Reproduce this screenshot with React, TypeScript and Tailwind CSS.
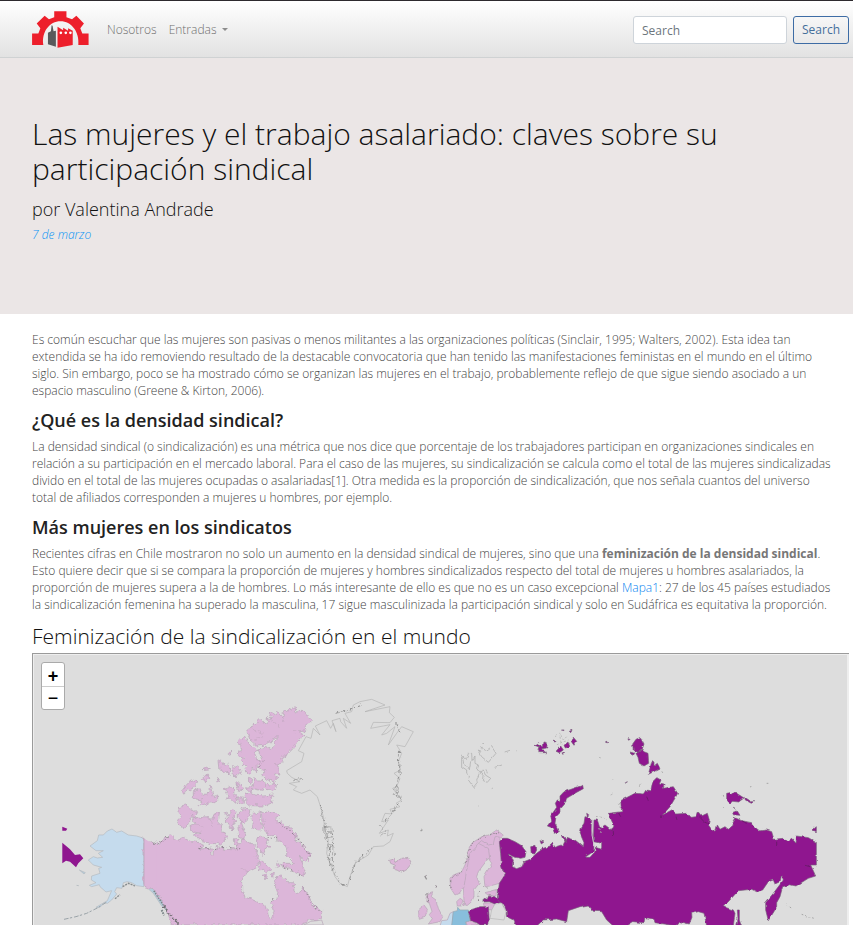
import React from "react";

const RED = "#ed1f2b";

function Logo() {
  return (
    <svg viewBox="96 32 172 112" className="h-[37px] w-[57px]" role="img" aria-label="Inicio">
      <path
        fill={RED}
        d="M163 33H200V51L217 57 230 46 253 70 242 84 248 100H267V135H236C240 95 215 63 182 63C149 63 124 95 130 135H96V100H115L121 84 110 70 134 46 147 57 163 51Z"
      />
      <path fill="#58595b" d="M144 98L153 93 155 75 158 77 161 93 168 92V140L144 133Z" />
      <path fill={RED} d="M173 80L190 90V83L205 92V84L219 92V135L173 143Z" />
      <g fill="#fff">
        <circle cx="183" cy="98" r="4" />
        <circle cx="198" cy="98" r="4" />
        <circle cx="212" cy="98" r="4" />
      </g>
    </svg>
  );
}

function Navbar() {
  return (
    <nav className="flex h-[58px] shrink-0 items-center border-t border-b border-t-[#2d2a2e] border-b-[#cfd2d3] bg-linear-to-b from-white to-[#e2e2e2] pt-px pr-1 pl-8">
      <a href="#inicio" className="mr-[18px]">
        <Logo />
      </a>
      <div className="flex flex-1 items-center gap-3 text-[12px] font-light text-[#6f6f6f]">
        <a href="#nosotros">Nosotros</a>
        <button type="button" className="flex items-center gap-[6px]">
          Entradas
          <span className="border-x-[3px] border-t-[3px] border-x-transparent border-t-[#8c8c8c]" />
        </button>
      </div>
      <form className="flex items-center gap-[6px] text-[12px]">
        <input
          type="search"
          aria-label="Search"
          placeholder="Search"
          className="h-7 w-[154px] rounded-[3px] border border-[#ced4da] bg-white px-2 pt-px placeholder:text-[#6c757d]"
        />
        <button type="button" className="h-7 rounded-[3px] border border-[#3d6ca5] px-2 text-[#446e9b]">
          Search
        </button>
      </form>
    </nav>
  );
}

const PINK = "#dcb6d9";
const PURPLE = "#8f168f";

const canada = [
  "M-18 447L0 455 12 463 20 456 28 460 40 447 56 443 62 434 68 440 85 448 100 442 120 452 145 458 165 468 150 478 185 474 186 494 192 494 195 476 205 468 225 478 265 480 262 462 275 460 280 445 300 460 312 462 320 480 318 492 332 508 320 530 290 545 283 560 275 575 275 600 285 620 305 628 330 640 350 650 355 680 365 690 372 675 365 640 380 625 385 600 375 580 380 560 395 558 410 575 430 575 432 600 445 612 455 600 460 585 472 612 485 640 515 665 515 685 500 692 480 693 450 705H65L45 650 20 605 -5 590 -18 587Z",
  "M290 122L312 108 330 88 342 99 352 98 348 85 365 90 358 70 365 65 376 74 385 62 398 78 404 65 430 53 440 66 455 62 470 75 484 93 465 110 470 122 445 126 462 135 440 160 425 180 410 195 395 205 400 218 382 225 390 250 376 256 380 268 368 276 350 268 335 255 345 242 325 235 325 215 335 205 325 180 370 170 385 140 365 148 350 165 320 168 300 150Z",
  "M268 155L283 137 296 160 318 178 315 195 330 215 318 224 320 245 306 234 308 250 292 248 285 240 290 228 278 215 284 205 265 200 262 185 276 182Z",
  "M290 295L304 293 310 285 315 262 324 272 340 275 355 285 380 280 375 300 365 305 350 294 335 301 312 296 300 305Z",
  "M285 310L300 305 315 315 340 318 370 315 364 340 340 348 300 347 288 335Z",
  "M130 305L150 295 158 318 175 310 180 285 190 320 203 315 203 330 178 338 160 350 150 343 160 332 130 325Z",
  "M95 303L115 278 140 268 138 288 120 300 112 294 108 310 98 312Z",
  "M155 242L175 232 180 240Z M155 265L172 255 178 264 162 275Z M207 212L217 215 220 225 234 222 243 238 240 258 228 246 210 240Z M250 230L262 232 274 247 262 252 254 260Z",
  "M225 296L236 290 250 292 252 310 262 320 255 338 242 325 228 330 234 316Z M258 282L270 282 282 292 280 302 266 300Z M262 322L280 325 280 340 265 338Z M200 262L212 278 205 275Z M238 190L244 180 246 195Z M295 265L305 268 302 280 296 275Z",
  "M85 350L105 345 124 356 142 370 120 385 118 400 105 418 80 402 90 380Z",
  "M125 375L150 385 165 380 185 388 192 370 208 366 205 395 215 405 213 425 228 430 228 450 215 462 180 460 160 455 130 435 155 430 125 425 120 410 135 402Z",
  "M228 368L238 372 250 360 258 368 256 380 248 382 255 400 245 420 238 402 230 400Z M268 362L280 356 300 360 294 385 285 395 282 402 268 390Z M264 414L275 395 288 430 280 448 266 442Z M250 450L264 448 264 464 252 462Z",
  "M310 370L335 365 330 395 340 412 325 425 308 412 303 385Z",
  "M337 370L352 364 375 365 390 380 372 386 388 400 392 392 404 408 425 415 430 425 442 436 440 450 450 465 466 475 482 495 470 515 450 502 458 525 466 545 460 560 444 548 430 545 416 532 400 530 395 520 430 520 410 500 410 470 390 455 375 440 350 430 340 410Z",
  "M325 438L350 444 357 470 346 478 340 495 320 470Z",
  "M330 512L345 522 362 540 350 546 340 538 325 540Z M340 555L350 555 345 567Z M364 550L370 548 368 564Z M380 520L392 518 392 530 382 532Z",
];

const greenland =
  "M172 250L170 242 215 215 222 190 205 182 228 140 243 145 250 115 270 135 256 108 290 92 302 115 310 100 318 125 306 92 330 85 332 95 350 115 340 85 362 100 345 70 365 65 370 45 390 35 425 28 465 45 405 65 480 50 478 68 493 82 480 98 430 97 422 115 460 108 480 104 455 135 470 130 495 110 475 165 500 130 515 110 550 125 525 170 500 165 515 190 505 215 512 240 492 250 510 265 500 290 488 295 515 330 498 340 510 350 480 358 486 372 465 370 455 395 475 390 448 430 475 420 472 438 490 430 480 455 460 468 430 470 415 495 390 510 375 520 360 560 352 590 330 580 315 560 300 520 290 490 295 450 285 420 280 380 270 345 262 320 240 300 215 310 190 300 200 290 178 280 210 275 185 262Z";

const russia = [
  "M298 365L308 355 322 355 345 365 365 377 378 395 375 412 362 415 340 410 325 402 340 420 337 440 350 446 366 440 372 425 390 418 410 400 430 385 450 378 458 370 465 382 490 374 500 352 525 360 550 380 552 368 540 340 545 320 552 310 555 290 575 295 575 330 582 380 580 395 555 412 570 412 585 395 586 382 605 388 605 370 580 365 582 300 592 300 600 325 615 315 635 330 642 318 625 280 665 275 662 242 705 220 730 222 738 210 752 213 758 185 770 173 783 180 778 192 792 195 790 205 820 200 833 220 825 235 810 260 788 285 815 270 830 282 860 280 870 292 890 290 895 276 905 288 922 280 928 300 925 315 940 335 948 330 952 315 960 328 975 320 985 328 1000 315 996 308 1005 293 1025 302 1055 308 1060 320 1075 333 1100 330 1115 335 1122 358 1150 355 1165 362 1175 355 1188 370 1190 348 1225 353 1249 367V435L1232 435 1247 468 1225 475 1188 498 1170 494 1148 500 1140 530 1130 548 1130 562 1105 602 1097 570 1097 548 1120 520 1150 480 1145 465 1140 485 1125 492 1120 480 1105 485 1088 510 1070 515 1055 508 1015 512 985 545 970 560 1000 570 1005 580 1000 618H920L912 580 895 575 875 580 876 592 868 612 840 605 830 618 765 608 762 598 735 592 732 608 700 605 680 618H640L620 600 605 575 580 574 565 555 540 560 505 572 500 605 470 597 430 600 410 618H350L340 600 320 590 318 570 310 550 290 545 295 515 298 490 315 465 305 440 302 400Z",
  "M442 318L455 300 452 288 470 262 466 250 472 240 480 242 480 228 492 215 548 196 550 206 528 218 500 235 498 244 480 265 480 278 468 290 465 310 478 335 462 340 458 324Z",
  "M484 345L492 350 500 368 488 356Z M420 362L432 366 424 372Z M392 380L408 376 410 390 404 402 394 400Z M560 280L566 284 562 290Z",
  "M404 76L416 68 419 82Z M414 88L420 74 430 80 432 66 442 68 440 84 426 86 426 92 440 98 418 98Z M468 94L482 78 490 90 478 98Z M492 76L504 66 510 80 496 84Z M512 62L520 52 530 64 522 76Z M484 30L490 26 492 32Z M508 34L516 31 512 38Z M486 98L494 100 488 103Z M458 60L470 64 462 66Z",
  "M616 66L622 63 622 69Z M684 53L692 56 686 61Z M676 188L682 185 680 192Z",
  "M698 72L708 58 722 52 732 72 726 90 712 98 700 92Z M708 100L724 92 744 100 746 130 732 138 718 130 714 112Z M745 163L756 122 762 126 762 138 772 130 780 146Z M690 96L704 100 700 106Z",
  "M980 220L990 218 994 226 1004 216 1032 234 1016 246 998 244 990 250 980 240Z M1034 232L1050 242 1064 242 1054 250 1036 240Z M998 278L1010 270 1020 286 1000 284Z M1238 330L1249 320 1249 335Z M1000 262L1006 266Z",
  "M1012 570L1018 570 1018 600 1024 618H1010L1014 596Z",
  "M252 535L262 538 266 528 285 530 300 548 285 552 268 545 252 546Z",
  "M205 572L240 560 265 560 268 600 262 615H240L230 608 212 602Z",
];

const nordic = [
  "M150 478L160 465 185 455 195 435 205 410 202 398 215 370 245 350 268 345 290 330 310 345 300 355 298 375 302 400 305 440 315 465 298 490 270 498 255 500 252 470 275 430 265 415 250 435 235 455 230 470 238 490 222 510 222 530 215 545 200 558 192 545 190 500 180 518 165 525 152 505Z",
  "M84 520L98 515 94 530 108 540 115 565 128 590 120 605 85 612 97 596 88 584 96 574 88 550 80 545Z",
  "M55 570L72 555 82 568 75 592 58 598Z",
  "M170 545L180 535 188 540 185 558 172 558Z M190 552L196 550 194 560Z",
  "M255 518L290 508 288 528 265 526Z",
  "M250 550L285 548 278 570 255 568Z",
  "M197 605L215 603 235 615H195Z",
];

const UNIT = "scale(0.33333)";

function WorldMap() {
  return (
    <svg
      viewBox="34 655 813 270"
      preserveAspectRatio="xMidYMin slice"
      className="block size-full"
      role="img"
      aria-label="Mapa de la feminización de la sindicalización en el mundo"
    >
      <defs>
        <filter id="fjords" x="-5%" y="-5%" width="110%" height="110%">
          <feTurbulence type="fractalNoise" baseFrequency="0.07" numOctaves="3" seed="4" />
          <feDisplacementMap in="SourceGraphic" scale="20" xChannelSelector="R" yChannelSelector="G" />
        </filter>
        <filter id="coast" x="-5%" y="-5%" width="110%" height="110%">
          <feTurbulence type="fractalNoise" baseFrequency="0.06" numOctaves="2" seed="4" />
          <feDisplacementMap in="SourceGraphic" scale="9" xChannelSelector="R" yChannelSelector="G" />
        </filter>
      </defs>

      {/* Alaska and the Aleutians */}
      <g transform={`translate(20 620) ${UNIT}`} stroke="#b3b9c0" strokeWidth="2">
        <path
          fill="#c5dbed"
          d="M210 678L232 662 236 645 250 645 262 633 276 627 290 637 305 633 325 645 350 648 372 655V800L350 797 335 788 322 785 310 788 306 805 290 803 284 815 290 822 275 840 262 850 252 848 240 862 228 862 262 842 275 812 258 816 240 800 238 794 215 800 208 796 228 788 214 780 215 768 240 760 236 745 245 742 220 735 205 720 220 710 232 714 248 712 235 700 250 692 228 692Z"
        />
        <path fill="#b4cddc" d="M372 795L390 806 402 804 414 825 435 850 440 870 425 858 400 820Z" />
        <path fill="none" stroke="#9aa3a8" strokeWidth="3" strokeDasharray="14 4 7 6" d="M132 898L168 890 200 880 232 864 262 845" />
        <path fill="none" stroke="#858c8e" strokeWidth="4" strokeDasharray="6 3" d="M285 836L300 824M308 800L325 790 345 798" />
        <path fill="none" stroke="#7b8588" strokeWidth="6" strokeDasharray="5 3" d="M402 812L422 842 440 868M425 870L432 886" />
        <path fill="#b4cddc" d="M178 750L196 758 192 762Z M170 796L176 797Z" />
      </g>

      <g transform={`translate(150 690) ${UNIT}`} fill={PINK} stroke="#b7a5b6" strokeWidth="2">
        <g filter="url(#fjords)">
          {canada.map((d) => (
            <path key={d} d={d} />
          ))}
        </g>
        <path stroke="none" d="M-18 447L20 465V595L-18 587Z" />
        <path fill="none" d="M-18 447V587" />
        <g fill="none" stroke="#8f838f" strokeDasharray="7 6 3 8" strokeWidth="3" filter="url(#fjords)">
          <path d="M8 460L30 458 60 438M145 472L190 480 230 470 268 480M388 400L440 440 480 500M400 530L460 560" />
          <path d="M460 590L485 640 515 668M326 235L345 205M365 625L368 645M350 440L380 450" />
        </g>
        <path fill="none" stroke="#737075" strokeDasharray="8 3 4 3" strokeWidth="5" filter="url(#fjords)" d="M40 645L58 675 90 705" />
        <path
          fill="none"
          stroke="#c5a9c3"
          filter="url(#fjords)"
          d="M310 120L340 130M370 90L385 110M400 80L405 100M300 150L340 140M440 126L425 124M370 220L385 222M130 405L160 408M185 390L188 410M310 500L325 510M278 538L300 543"
        />
        <path fill="#ddd" stroke="#b7a5b6" d="M515 690L502 692 482 694 462 705H520Z" />
      </g>

      {/* Greenland and Iceland */}
      <g transform={`translate(230 690) ${UNIT}`} fill="none" stroke="#b4b4b4" strokeWidth="2">
        <path d={greenland} />
        <g filter="url(#fjords)" stroke="#8c8c8c" strokeWidth="3" strokeDasharray="9 4 3 5">
          <path d="M270 345L285 400 292 440 300 520 330 580 352 588M290 405L310 450 300 480M302 480L312 535" />
          <path d="M508 180L510 250 495 300 512 335 485 370 460 400M358 570L375 520 430 470M320 70L395 45M500 100L510 130" />
        </g>
        <g filter="url(#fjords)" stroke="#999" strokeWidth="2">
          <path d="M285 408L306 412 308 440 284 445ZM294 465L312 470 310 500 296 512 310 530 304 545M190 270L212 265 208 278M488 295L505 292 492 315 515 322M450 405L466 425 448 438M480 375L496 360 490 345" />
        </g>
        <path
          filter="url(#coast)"
          fill={PINK}
          stroke="#aa9ca9"
          d="M478 508L490 505 495 517 515 505 535 502 545 520 532 536 515 546 490 538 496 526 482 520Z"
        />
        <path stroke="#999" strokeWidth="4" d="M572 423L577 419M584 558L590 568" />
      </g>

      {/* Svalbard, Europe and Russia */}
      <g transform={`translate(400 720) ${UNIT}`} stroke="#b7a5b6" strokeWidth="2">
        <g fill="none" stroke="#a8a8a8" filter="url(#coast)">
          <path d="M185 105L200 118 205 100 215 100 216 122 225 108 225 130 235 135 232 150 240 155 250 150 256 165 272 175 262 187 250 182 252 170 240 155 230 180 232 190 222 203 205 180 208 168 200 160 200 150 185 140Z" />
          <path d="M232 90L240 94 245 80 255 95 275 80 288 100 265 127 245 110ZM246 72L252 74M314 96L330 91M284 142L306 135M349 92L351 93M275 206L279 204M235 258L240 259M62 332L67 329M258 148L262 160M190 112L196 138 206 146M212 124L208 150" />
          <path strokeDasharray="6 6" d="M465 50L480 40 490 60 500 50M470 75L490 65 505 62M480 50L484 75M597 112L606 115M636 180L640 180M632 225L638 222" />
        </g>
        <g fill={PINK} filter="url(#coast)">
          {nordic.map((d) => (
            <path key={d} d={d} />
          ))}
          <path fill="none" d="M192 500L200 450 210 400 235 370 265 385 270 420M235 370L245 362 265 375 280 372 285 350 300 352" />
        </g>
        <g fill="none" stroke="#8f858e" strokeWidth="3" strokeDasharray="8 4 3 5" filter="url(#fjords)">
          <path d="M152 510L152 480 185 455M195 430L215 375 240 352 300 335M80 520L88 550M74 470L78 478M108 500L112 490M250 500L262 508M240 515L232 540" />
        </g>
        <path fill="#c5dbed" d="M125 602L142 600 150 580 160 575 156 618H120Z" />
        <path fill="#88bedc" stroke="#93a7b2" d="M160 575L172 572 173 562 180 570 205 570 210 602 196 606 200 618H155Z" />
        <g fill={PURPLE} stroke="#77607a" strokeWidth="2">
          <g filter="url(#coast)">
            {russia.map((d) => (
              <path key={d} d={d} />
            ))}
          </g>
        </g>
        <path fill="#ddd" stroke="#b8b8b8" d="M285 552L305 550 318 575 312 600 270 595 275 570Z" />
        <g fill="none" stroke="#6c1a6d" strokeWidth="3" filter="url(#coast)">
          <path d="M740 230L745 242M655 278L662 290M780 288L790 290M828 290L831 300M898 290L912 305 926 312M636 325L638 348M1215 436L1230 440M1130 365L1130 378M1025 302L1040 310" />
        </g>
        <g fill="none" stroke="#a5a5a5" strokeWidth="3" strokeDasharray="5 6" filter="url(#coast)">
          <path d="M588 290L610 292 625 300M655 250L662 265M595 325L606 340M676 190L684 187M718 200L724 190M970 225L972 236M970 262L976 268M1050 200L1060 202M1100 190L1105 190M1160 555L1174 564M1205 583L1245 596M785 155L792 160" />
        </g>
        <path fill="none" stroke="#cfc0d0" strokeWidth="3" d="M577 300L576 345 584 385" />
      </g>

      <path fill={PURPLE} d="M62.300 842.700L70 849.300 75 855 80 854.300 83.300 858.300 78.300 863.300 76 867.300 70 861.700 66 860.700 62.300 863.300ZM62.300 826.700L67.300 828.700 66 830.700H62.300Z" />
    </svg>
  );
}

const paragraph = "pr-[15px] text-[12px] leading-[17px] font-light text-[#444]";
const sectionTitle = "mt-[10px] mb-[7px] text-[18px] leading-[22px] font-semibold text-[#222]";

export default function App() {
  return (
    <div className="flex h-screen flex-col overflow-hidden bg-white font-['Open_Sans','Noto_Sans',sans-serif]">
      <Navbar />

      <header className="h-64 shrink-0 bg-[#ebe6e6] pt-[58px] pr-1 pl-8 text-[#111]">
        <h1 className="mb-2 text-[30px] leading-[35px] font-light">
          Las mujeres y el trabajo asalariado: claves sobre su participación sindical
        </h1>
        <p className="mb-1 text-[18px] leading-[30px] font-light">por Valentina Andrade</p>
        <p className="text-[12px] leading-[14px] font-light text-[#0a94f5] italic">7 de marzo</p>
      </header>

      <main className="flex min-h-0 flex-1 flex-col pt-[17px] pr-1 pb-px pl-8">
        <p className={paragraph}>
          Es común escuchar que las mujeres son pasivas o menos militantes a las organizaciones políticas (Sinclair,
          1995; Walters, 2002). Esta idea tan extendida se ha ido removiendo resultado de la destacable convocatoria
          que han tenido las manifestaciones feministas en el mundo en el último siglo. Sin embargo, poco se ha
          mostrado cómo se organizan las mujeres en el trabajo, probablemente reflejo de que sigue siendo asociado a un
          espacio masculino (Greene &amp; Kirton, 2006).
        </p>
        <h2 className={sectionTitle}>¿Qué es la densidad sindical?</h2>
        <p className={paragraph}>
          La densidad sindical (o sindicalización) es una métrica que nos dice que porcentaje de los trabajadores
          participan en organizaciones sindicales en relación a su participación en el mercado laboral. Para el caso de
          las mujeres, su sindicalización se calcula como el total de las mujeres sindicalizadas divido en el total de
          las mujeres ocupadas o asalariadas[1]. Otra medida es la proporción de sindicalización, que nos señala
          cuantos del universo total de afiliados corresponden a mujeres u hombres, por ejemplo.
        </p>
        <h2 className={sectionTitle}>Más mujeres en los sindicatos</h2>
        <p className={paragraph}>
          Recientes cifras en Chile mostraron no solo un aumento en la densidad sindical de mujeres, sino que una{" "}
          <strong className="font-bold text-[#777]">feminización de la densidad sindical</strong>. Esto quiere decir
          que si se compara la proporción de mujeres y hombres sindicalizados respecto del total de mujeres u hombres
          asalariados, la proporción de mujeres supera a la de hombres. Lo más interesante de ello es que no es un caso
          excepcional{" "}
          <a href="#mapa" className="text-[#0a84f0]">
            Mapa1
          </a>
          : 27 de los 45 países estudiados la sindicalización femenina ha superado la masculina, 17 sigue masculinizada
          la participación sindical y solo en Sudáfrica es equitativa la proporción.
        </p>
        <h3 className="mt-[10px] mb-[3px] text-[21px] leading-[27px] font-light text-[#111]">
          Feminización de la sindicalización en el mundo
        </h3>

        <section id="mapa" className="min-h-0 flex-1 border-t border-l border-[#9a9a9a]">
          <div className="relative size-full overflow-hidden border-t border-r-2 border-l border-[#eee] bg-[#ddd]">
            <WorldMap />
            <div className="absolute top-[7px] left-[7px] flex w-6 flex-col rounded-[3px] border border-[#aaa] bg-white font-['Liberation_Sans',Arial,sans-serif] text-[18px] text-black">
              <button type="button" aria-label="Acercar" className="flex h-6 items-center justify-center border-b border-[#ccc] pt-[3px] font-bold">
                +
              </button>
              <button type="button" aria-label="Alejar" className="flex h-[22px] items-center justify-center pt-px">
                −
              </button>
            </div>
          </div>
        </section>
      </main>
    </div>
  );
}
